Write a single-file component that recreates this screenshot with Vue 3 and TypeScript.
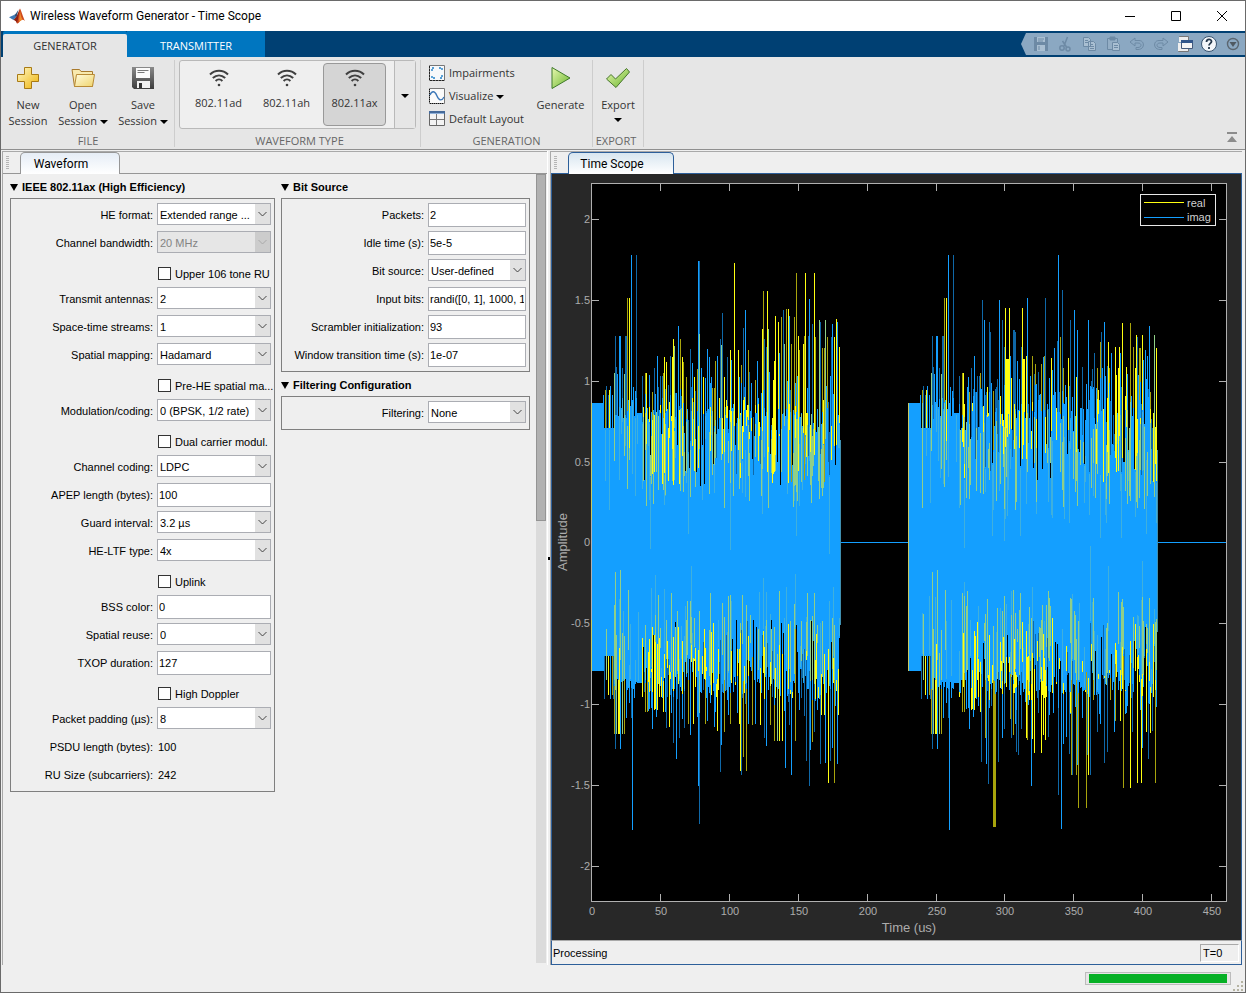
<script setup lang="ts">
import { ref } from 'vue'

type Kind = 'select' | 'input' | 'check' | 'static'
interface Field {
  id: string
  label: string
  kind: Kind
  value: string
  disabled?: boolean
}

const f = (id: string, kind: Kind, label: string, value = '', disabled = false): Field => ({ id, kind, label, value, disabled })

const heFields = ref<Field[]>([
  f('he-format', 'select', 'HE format:', 'Extended range ...'),
  f('bandwidth', 'select', 'Channel bandwidth:', '20 MHz', true),
  f('upper-ru', 'check', 'Upper 106 tone RU'),
  f('antennas', 'select', 'Transmit antennas:', '2'),
  f('streams', 'select', 'Space-time streams:', '1'),
  f('mapping', 'select', 'Spatial mapping:', 'Hadamard'),
  f('pre-he', 'check', 'Pre-HE spatial ma...'),
  f('mcs', 'select', 'Modulation/coding:', '0 (BPSK, 1/2 rate)'),
  f('dcm', 'check', 'Dual carrier modul.'),
  f('coding', 'select', 'Channel coding:', 'LDPC'),
  f('apep', 'input', 'APEP length (bytes):', '100'),
  f('guard', 'select', 'Guard interval:', '3.2 µs'),
  f('ltf', 'select', 'HE-LTF type:', '4x'),
  f('uplink', 'check', 'Uplink'),
  f('bss', 'input', 'BSS color:', '0'),
  f('reuse', 'select', 'Spatial reuse:', '0'),
  f('txop', 'input', 'TXOP duration:', '127'),
  f('doppler', 'check', 'High Doppler'),
  f('padding', 'select', 'Packet padding (µs):', '8'),
  f('psdu', 'static', 'PSDU length (bytes):', '100'),
  f('ru-size', 'static', 'RU Size (subcarriers):', '242'),
])
const bitFields = ref<Field[]>([
  f('packets', 'input', 'Packets:', '2'),
  f('idle', 'input', 'Idle time (s):', '5e-5'),
  f('bit-source', 'select', 'Bit source:', 'User-defined'),
  f('bits', 'input', 'Input bits:', 'randi([0, 1], 1000, 1, \'int8\')'),
  f('scrambler', 'input', 'Scrambler initialization:', '93'),
  f('window', 'input', 'Window transition time (s):', '1e-07'),
])
const filterFields = ref<Field[]>([f('filtering', 'select', 'Filtering:', 'None')])

const columns = [
  { cls: 'wide', groups: [{ title: 'IEEE 802.11ax (High Efficiency)', fields: heFields.value }] },
  {
    cls: 'narrow',
    groups: [
      { title: 'Bit Source', fields: bitFields.value },
      { title: 'Filtering Configuration', fields: filterFields.value },
    ],
  },
]

const waveforms = ['802.11ad', '802.11ah', '802.11ax']
const selected = ref('802.11ax')

/* Scope geometry */
const yTicks = [2, 1.5, 1, 0.5, 0, -0.5, -1, -1.5, -2].map((v, i) => ({ v, y: 219 + Math.round(i * 80.85) }))
const xTicks = [0, 50, 100, 150, 200, 250, 300, 350, 400, 450].map((v, i) => ({ v, x: 592 + Math.round(i * 68.9) }))

/* Peaks as "x,y,kind": b/c bright and dim imag, y/z bright and dim real, g mixed */
const preTop = '603,395,b 605,390,z 606,386,c 608,395,c 609,390,y 610,386,b 612,395,b 614,373,g 615,336,c 616,367,c 617,374,b 619,336,b 620,336,b 622,368,c 624,374,g 625,336,c 626,336,c 627,298,z 628,400,b 629,298,y 631,255,b 633,387,b 635,391,b 636,255,c 642,376,c 645,373,z 646,373,y 652,392,z 654,368,c 657,356,b 660,376,c 662,376,c 663,373,z'
const preBottom = '604,699,c 606,676,z 608,695,y 610,699,b 612,695,z 613,699,c 614,734,z 615,749,c 616,734,g 618,734,y 619,734,y 620,749,b 622,734,g 624,734,z 626,718,b 629,703,b 631,718,c 632,830,b 634,698,b 642,697,y 645,712,z 647,712,z 649,709,b 651,708,b 652,729,b 654,710,y 655,709,y 656,717,b 657,710,y 661,697,y 663,712,y'
const topA = '664,357,y 666,362,y 670,356,c 672,357,y 673,339,y 674,346,g 678,326,b 680,339,z 682,357,y 683,362,z 686,377,z 690,349,c 692,363,b 694,377,y 697,369,z 698,261,b 699,261,c 699,334,g 701,368,b 703,377,y 707,349,b 709,357,b 712,388,z 715,361,z 714,388,z 717,356,b 720,339,c 721,345,g 722,313,c 724,377,y 727,357,c 730,350,y 731,360,b 734,263,y 738,350,y 741,365,z 743,328,c 745,310,b 748,350,z 749,372,c 755,380,z 757,361,b 762,329,y 763,291,z 764,339,c 766,347,c 767,291,y 768,329,g 769,372,b 773,380,y 774,361,y 775,316,y 778,322,y 779,353,b 781,317,z 783,310,c 784,344,g 786,309,z 788,309,y 789,316,b 791,344,z 794,317,z 796,273,z 798,336,y 799,350,z 803,344,y 804,336,z 805,273,y 808,336,c 809,299,b 812,324,c 814,273,y 815,337,z 819,320,g 820,322,c 822,348,z 824,348,z 825,320,g 827,337,z 831,337,c 832,324,b 834,337,y 836,319,y 837,322,b 839,347,y'
const bottomA = '666,728,c 669,727,y 673,743,c 676,759,b 679,738,c 682,719,b 684,728,c 688,724,z 690,735,b 693,724,y 697,717,b 699,824,c 698,786,b 699,713,g 705,724,z 707,721,b 711,693,b 714,727,b 717,731,y 720,772,c 721,745,b 724,732,z 727,700,b 730,724,z 737,713,b 739,724,y 740,771,y 741,775,c 743,757,z 746,771,z 748,724,b 752,725,z 755,724,b 760,725,y 764,738,c 766,746,b 770,725,z 774,741,z 777,741,g 779,741,y 782,741,y 785,768,b 789,725,c 791,775,b 795,741,z 799,710,b 804,716,c 806,761,c 809,786,c 810,750,b 812,742,z 814,732,c 817,710,b 820,764,c 821,715,y 824,715,y 825,763,b 828,783,y 830,761,c 832,748,b 834,783,z 837,764,b 838,715,y'
const topB = '982,300,c 984,320,b 987,387,y 989,322,c 990,332,c 993,391,z 997,379,c 999,300,b 1002,320,c 1004,347,c 1005,308,y 1006,359,y 1007,359,y 1008,359,y 1009,308,y 1010,356,b 1011,378,y 1013,330,c 1014,330,c 1015,332,c 1017,361,b 1019,379,b 1021,347,c 1022,308,y 1023,359,y 1024,359,y 1026,356,y 1027,298,b 1032,356,z 1034,374,c 1035,364,z 1038,372,c 1041,364,z 1043,357,b 1044,356,z 1045,298,c 1051,358,y 1052,370,b 1054,348,b 1057,341,c 1058,255,b 1060,337,z 1062,290,c 1063,368,z 1068,358,y 1070,320,c 1074,310,b 1076,377,y 1077,330,b 1082,367,c 1088,320,b 1091,381,c 1092,369,c 1094,353,c 1097,368,z 1098,390,y 1100,342,z 1101,332,c 1102,368,b 1104,322,b 1107,366,c 1108,342,y 1109,368,z 1111,353,b 1115,347,y 1116,375,y 1118,368,y 1119,347,y 1120,353,b 1122,323,y 1126,367,y 1127,374,b 1130,323,z 1133,347,z 1135,368,y 1136,335,y 1137,337,c 1139,348,z 1140,348,z 1142,335,y 1143,360,b 1145,350,b 1147,356,b 1149,326,b 1150,392,z 1154,335,g 1156,348,y'
const bottomB = '981,762,c 985,738,z 986,764,b 988,784,c 991,706,c 993,827,z 994,827,z 995,827,z 998,762,c 1000,688,y 1002,738,b 1004,729,c 1010,719,z 1011,738,c 1013,735,z 1015,724,b 1016,752,c 1018,755,c 1021,729,c 1026,738,y 1027,740,z 1029,700,y 1031,786,b 1032,739,y 1034,753,y 1038,713,c 1041,753,y 1043,735,y 1045,740,y 1048,737,c 1049,715,b 1052,693,y 1058,795,c 1061,829,b 1063,744,b 1066,737,b 1069,754,c 1070,713,y 1071,775,z 1072,775,c 1076,775,z 1077,765,b 1078,808,z 1082,718,b 1086,808,z 1087,755,c 1088,775,y 1090,775,c 1093,700,z 1097,732,c 1100,724,b 1104,763,c 1107,752,c 1110,700,z 1114,732,b 1115,721,z 1120,721,y 1123,788,z 1130,788,y 1132,732,c 1137,783,y 1141,783,y 1142,748,b 1146,732,y 1148,759,c 1150,733,y 1152,731,c 1155,783,z'

interface Peak { x: number; y: number; k: string }
const read = (s: string, dx = 0): Peak[] =>
  s.split(' ').map((p) => {
    const [x, y, k] = p.split(',')
    return { x: Number(x) + dx, y: Number(y), k }
  })

let seed = 20211
const rnd = (): number => {
  seed = (seed * 16807) % 2147483647
  return seed / 2147483647
}

const colors: Record<string, string> = {
  b: '#149fff',
  c: '#0f68a8',
  y: '#ffff11',
  z: '#a8a40c',
  g: '#8fcf88',
  t: '#3fb0dd',
}
const order = ['c', 'z', 'b', 'y']

function buildStrokes(): { color: string; d: string }[] {
  const back: Record<string, string> = { c: '', z: '', b: '', y: '' }
  const core: string[] = []
  const front: Record<string, string> = { g: '', t: '', y: '', z: '' }
  const line = (x: number, y0: number, y1: number): string => `M${x + 0.5} ${Math.round(y0)}V${Math.round(y1)}`

  for (const start of [592, 909]) {
    const dx = start - 592
    for (let x = start; x < start + 248; x++) {
      const r = x - start
      let top = 403
      let bottom = 671
      if (r >= 12 && r < 22) {
        top = 428
        bottom = 656
      } else if (r >= 22 && r < 45) {
        top = 398 + rnd() * 22
        bottom = 690 - rnd() * 12
      } else if (r >= 45 && r < 50) {
        top = 413
        bottom = 683
      } else if (r >= 50) {
        top = 408 + Math.pow(rnd(), 1.3) * 78
        bottom = 694 - Math.pow(rnd(), 1.3) * 76
        if (rnd() < 0.3) back.y += line(x, 395 + rnd() * 40, 542)
        if (rnd() < 0.3) back.y += line(x, 542, 700 - rnd() * 40)
        if (rnd() < 0.3) back.b += line(x, 375 + rnd() * 45, 542)
        if (rnd() < 0.3) back.b += line(x, 542, 715 - rnd() * 40)
        if (rnd() < 0.35) back.c += line(x, 385 + rnd() * 50, 542)
        if (rnd() < 0.35) back.c += line(x, 542, 705 - rnd() * 50)
        if (rnd() < 0.2) front.g += line(x, 410 + rnd() * 45, 460 + rnd() * 50)
        if (rnd() < 0.2) front.g += line(x, 590 + rnd() * 40, 640 + rnd() * 45)
      }
      core.push(line(x, top, bottom))
      if (r > 12 && rnd() < 0.2) front.t += line(x, top + 2, top + 20 + rnd() * 65)
      if (r > 12 && rnd() < 0.2) front.t += line(x, bottom - 20 - rnd() * 65, bottom - 2)
    }
    const tops = [...read(preTop, dx), ...read(dx ? topB : topA)]
    const bottoms = [...read(preBottom, dx), ...read(dx ? bottomB : bottomA)]
    for (const p of tops) {
      if (p.k === 'g') front.g += line(p.x, p.y, 425 + rnd() * 50)
      else back[p.k] += line(p.x, p.y, 542)
      if (p.k === 'y' && rnd() < 0.55) front.y += line(p.x, p.y, 405 + rnd() * 60)
      if (p.k === 'z' && rnd() < 0.45) front.g += line(p.x, 400 + rnd() * 30, 450 + rnd() * 60)
    }
    for (const p of bottoms) {
      if (p.k === 'g') front.g += line(p.x, 610 + rnd() * 50, p.y)
      else back[p.k] += line(p.x, 542, p.y)
      if (p.k === 'y' && rnd() < 0.55) front.y += line(p.x, 630 + rnd() * 50, p.y)
      if (p.k === 'z' && rnd() < 0.45) front.g += line(p.x, 590 + rnd() * 50, 680)
    }
    front.g += line(629 + dx, 415, 460) + line(620 + dx, 570, 660) + line(615 + dx, 572, 690) + line(628 + dx, 590, 650)
  }
  return [
    ...order.map((k) => ({ color: colors[k], d: back[k] })),
    { color: colors.b, d: core.join('') },
    { color: colors.t, d: front.t },
    { color: colors.g, d: front.g },
    { color: colors.y, d: front.y },
  ].filter((s) => s.d)
}
const strokes = buildStrokes()
</script>

<template>
  <div class="window">
    <header class="titlebar">
      <svg class="logo" width="16" height="16" viewBox="0 0 16 16" aria-hidden="true">
        <path d="M0 9.200L5 7l2.500 2L4.500 12z" fill="#3b78b5" />
        <path d="M5 7c2-.5 3-3.500 4.500-5.500L7.500 9.500z" fill="#2c4f7a" />
        <path d="M4.500 12L7.500 9 11 .5C12 2 14 9 16 13c-2-2-4-2-6 1.500-.8.8-1.500 1-2 1C7.500 13.500 6 11.500 4.500 12z" fill="#cf4a1c" />
        <path d="M11 .5C10 5 9 11 8 15.500 7.500 13.500 6 12 4.500 12 8 10 9.500 4 11 .5z" fill="#8b1f13" />
        <path d="M11 3c.4 3 1 6 2.500 8.500L10 14z" fill="#f08a2c" />
      </svg>
      <h1>Wireless Waveform Generator - Time Scope</h1>
      <div class="window-buttons">
        <button aria-label="Minimize"><svg width="12" height="12" viewBox="0 0 12 12"><path d="M1 6.500h10" /></svg></button>
        <button aria-label="Maximize"><svg width="12" height="12" viewBox="0 0 12 12"><path d="M1.500 1.500h9v9h-9z" /></svg></button>
        <button aria-label="Close"><svg width="12" height="12" viewBox="0 0 12 12"><path d="M1 1l10 10M11 1L1 11" /></svg></button>
      </div>
    </header>

    <nav class="tabs">
      <button class="tab active">GENERATOR</button>
      <button class="tab">TRANSMITTER</button>
      <div class="quick">
        <button class="off" aria-label="Save"><svg viewBox="0 0 18 18"><path d="M2 2h14v14H2z" fill="#6d8aa5" /><path d="M5 2h8v5H5zM5 10h8v6H5z" fill="#a9bfd2" /><path d="M6 4h6M6 6h5M7 11v4" stroke="#6d8aa5" /></svg></button>
        <button class="off" aria-label="Cut"><svg viewBox="0 0 18 18" fill="none" stroke="#6d8aa5" stroke-width="1.500"><path d="M11.500 2L8 11M6.500 6l4 6" /><circle cx="6" cy="13" r="2.200" /><circle cx="12" cy="14" r="2" /></svg></button>
        <button class="off" aria-label="Copy"><svg viewBox="0 0 18 18" fill="#a9bfd2" stroke="#6d8aa5"><path d="M3.500 2.500h5l2 2v7h-7zM8.500 6.500h5l2 2v7h-7z" /><path d="M5 5.500h3M5 7.500h3M10 9.500h3M10 11.500h4M10 13.500h4" /></svg></button>
        <button class="off" aria-label="Paste"><svg viewBox="0 0 18 18" fill="#94aec5" stroke="#6d8aa5"><path d="M3.500 3.500h10v11h-10z" /><path d="M6 2h5v3H6z" fill="#6d8aa5" /><path d="M8.500 7.500h5l2 2v6h-7z" fill="#a9bfd2" /><path d="M10 10.500h4M10 12.500h4" /></svg></button>
        <button class="off" aria-label="Undo"><svg viewBox="0 0 18 18" fill="none" stroke="#6d8aa5"><path d="M2 7l5-4v2.500h4c6 0 6 9-1 9H8v-2h2c4 0 4-4.500 0-4.500H7V11z" /></svg></button>
        <button class="off" aria-label="Redo"><svg viewBox="0 0 18 18" fill="none" stroke="#6d8aa5"><path d="M16 7l-5-4v2.500H7c-6 0-6 9 1 9h2v-2H8c-4 0-4-4.500 0-4.500h3V11z" /></svg></button>
        <button aria-label="Windows"><svg viewBox="0 0 18 18"><path d="M3.500 1.500h9v5M3.500 1.500v5M2.500 9v7.500h10V14" fill="#eee" stroke="#777" /><path d="M3 2h9v5H3zM2 8h10v8H2z" fill="#eee" /><path d="M5.500 5.500h11v8h-11z" fill="#f5f5f5" stroke="#44597a" /><path d="M5 5h12v3H5z" fill="#32568a" /></svg></button>
        <button aria-label="Help"><svg viewBox="0 0 18 18"><circle cx="9" cy="9" r="7.500" fill="#f4f7fa" stroke="#38536f" /><path d="M6.500 7c0-3.500 5-3.300 5-.5 0 1.800-2.500 1.900-2.500 4M9 12v2" fill="none" stroke="#26394d" stroke-width="1.800" /></svg></button>
        <button aria-label="More"><svg viewBox="0 0 18 18"><circle cx="9" cy="9" r="5.500" fill="none" stroke="#5b6670" stroke-width="1.400" /><path d="M5.500 7h7L9 12z" fill="#4f5962" /></svg></button>
      </div>
    </nav>

    <section class="strip">
      <div class="section file">
        <div class="body">
          <button class="big">
            <svg width="24" height="24" viewBox="0 0 24 24"><defs><linearGradient id="gold" x1="0" y1="0" x2="1" y2="1"><stop offset="0" stop-color="#fff9c8" /><stop offset="1" stop-color="#eeb30a" /></linearGradient></defs><path d="M8.500 1.500h7v7h7v7h-7v7h-7v-7h-7v-7h7z" fill="url(#gold)" stroke="#a97a14" /></svg>
            <span>New</span><span>Session</span>
          </button>
          <button class="big">
            <svg width="24" height="24" viewBox="0 0 24 24"><defs><linearGradient id="sand" x1="0" y1="0" x2="1" y2="1"><stop offset="0" stop-color="#fffbe0" /><stop offset="1" stop-color="#f0d46a" /></linearGradient></defs><path d="M1 3.500h7.500l1.500 2h11.500V20.500H3.500z" fill="#f8e9ae" stroke="#a97a2c" /><path d="M5.500 8.500h18l-2 12H3.500z" fill="url(#sand)" stroke="#b88a35" /></svg>
            <span>Open</span><span>Session <i class="caret"></i></span>
          </button>
          <button class="big">
            <svg width="24" height="24" viewBox="0 0 24 24"><defs><linearGradient id="steel" x1="0" y1="0" x2="0" y2="1"><stop offset="0" stop-color="#8a8a8a" /><stop offset="1" stop-color="#3d3d3d" /></linearGradient></defs><path d="M1 1h22v22H3l-2-2z" fill="url(#steel)" /><path d="M5 2h14v10H5z" fill="#fafafa" /><path d="M6.500 4.500h11M6.500 6.500h7" stroke="#777" /><path d="M6 15h13v7H6z" fill="#f1f1f1" /><path d="M8 17h3v5H8z" fill="#333" /></svg>
            <span>Save</span><span>Session <i class="caret"></i></span>
          </button>
        </div>
        <h2>FILE</h2>
      </div>

      <div class="section waveform">
        <div class="body">
          <div class="gallery">
            <button v-for="w in waveforms" :key="w" class="tile" :class="{ on: selected === w }" @click="selected = w">
              <svg width="20" height="20" viewBox="0 0 20 20" fill="none" stroke="#404040" stroke-width="2"><path d="M1 6.500c5-5 13-5 18 0M3.800 10c3.800-3.500 8.600-3.500 12.400 0M6.600 13c2-2 4.800-2 6.800 0" /><circle cx="10" cy="17" r="1.300" fill="#404040" stroke="none" /></svg>
              <span>{{ w }}</span>
            </button>
            <button class="more" aria-label="More waveform types"><i class="caret"></i></button>
          </div>
        </div>
        <h2>WAVEFORM TYPE</h2>
      </div>

      <div class="section generation">
        <div class="body">
          <div class="stack">
            <button><svg width="16" height="16" viewBox="0 0 16 16"><path d="M.5.500h15v15H.5z" fill="#f7f9fb" stroke="#777" /><path d="M3 6V3h3M10 3h3v3M13 10v3h-3M6 13H3v-3" fill="none" stroke="#2080c8" stroke-width="1.400" stroke-dasharray="2 1" /><path d="M1 15.500h14M.5 1v14" stroke="#222" stroke-dasharray="2 1" /></svg>Impairments</button>
            <button><svg width="16" height="16" viewBox="0 0 16 16"><path d="M.5.500h15v15H.5z" fill="#fbfbfb" stroke="#777" /><path d="M1 7c2-5 5-4 7 1s5 5 7 1" fill="none" stroke="#3d78b8" stroke-width="1.400" /><path d="M1 15.500h14M.5 1v14" stroke="#111" stroke-dasharray="1 1" /></svg><span>Visualize <i class="caret"></i></span></button>
            <button><svg width="16" height="16" viewBox="0 0 16 16"><path d="M.5.500h15v14H.5z" fill="#f3f3f3" stroke="#666" /><path d="M0 0h16v3H0z" fill="#466a9a" /><path d="M1 2.500h14" stroke="#8fb0d8" /><path d="M1 8.500h14M7.500 3v11" stroke="#777" /></svg>Default Layout</button>
          </div>
          <button class="big generate">
            <svg width="24" height="24" viewBox="0 0 24 24"><defs><linearGradient id="leaf" x1="0" y1="0" x2="1" y2="1"><stop offset="0" stop-color="#e8f8b0" /><stop offset="1" stop-color="#68b52c" /></linearGradient></defs><path d="M3 1.500L21 12 3 22.500z" fill="url(#leaf)" stroke="#3f7a2a" /></svg>
            <span>Generate</span>
          </button>
        </div>
        <h2>GENERATION</h2>
      </div>

      <div class="section export">
        <div class="body">
          <button class="big">
            <svg width="24" height="24" viewBox="0 0 24 24"><path d="M.5 13L5 8.500 9.500 13 20.500 2.500l3 3.500L10 21.500z" fill="url(#leaf)" stroke="#47752c" /></svg>
            <span>Export</span><i class="caret"></i>
          </button>
        </div>
        <h2>EXPORT</h2>
      </div>
      <button class="collapse" aria-label="Collapse toolstrip"><svg width="12" height="12" viewBox="0 0 12 12" fill="#8c8c8c"><path d="M1 1h10v2H1zM6 5l5 6H1z" /></svg></button>
    </section>

    <main class="panes">
      <section class="pane left">
        <div class="docbar"><i class="grip"></i><button class="doctab">Waveform</button></div>
        <div class="scroller">
          <form class="columns" @submit.prevent>
            <div v-for="col in columns" :key="col.cls" :class="['column', col.cls]">
              <template v-for="g in col.groups" :key="g.title">
                <h3><i class="disclose"></i>{{ g.title }}</h3>
                <div class="group">
                  <div v-for="row in g.fields" :key="row.id" class="row">
                    <template v-if="row.kind === 'check'">
                      <span></span>
                      <label class="check"><input :id="row.id" type="checkbox" />{{ row.label }}</label>
                    </template>
                    <template v-else>
                      <label class="name" :for="row.id">{{ row.label }}</label>
                      <span v-if="row.kind === 'select'" class="drop" :class="{ dim: row.disabled }">
                        <select :id="row.id" v-model="row.value" :disabled="row.disabled"><option>{{ row.value }}</option></select>
                        <svg viewBox="0 0 15 20" aria-hidden="true"><path d="M3.500 8L7.500 12l4-4" fill="none" /></svg>
                      </span>
                      <input v-else-if="row.kind === 'input'" :id="row.id" v-model="row.value" class="text" type="text" />
                      <output v-else :id="row.id">{{ row.value }}</output>
                    </template>
                  </div>
                </div>
              </template>
            </div>
          </form>
          <div class="scrollbar"><i></i></div>
        </div>
      </section>
      <div class="divider"><i></i></div>
      <section class="pane right">
        <div class="docbar"><i class="grip"></i><button class="doctab">Time Scope</button></div>
        <div class="scope">
          <svg class="chart" viewBox="552 174 688 766" role="img" aria-label="Amplitude over time, real and imag">
            <rect x="592" y="183" width="634" height="718" fill="#000" />
            <g fill="none" shape-rendering="crispEdges">
              <g stroke="#b0b0b0">
                <path d="M591.500 183.500H1226.500V901.500H591.500Z" />
                <path v-for="t in yTicks" :key="t.v" :d="`M592 ${t.y + 0.5}h7M1226 ${t.y + 0.5}h-7`" />
                <path v-for="t in xTicks" :key="t.v" :d="`M${t.x - 0.5} 901v-7M${t.x - 0.5} 184v7`" />
              </g>
              <path v-for="(s, i) in strokes" :key="i" :d="s.d" :stroke="s.color" />
              <path d="M840 542.500H909M1157 542.500H1226" stroke="#149fff" />
              <path d="M591.500 403V520M591.500 620V671M908.500 403V671" stroke="#c8c860" />
              <path d="M840.500 440V625M1157.500 450V632" stroke="#3f8fb0" />
              <rect x="1140.500" y="194.500" width="75" height="31" fill="#000" stroke="#e8e8e8" />
              <path d="M1144 202.500h40" stroke="#ffff11" />
              <path d="M1144 217.500h40" stroke="#149fff" />
            </g>
            <g class="labels">
              <text v-for="t in yTicks" :key="t.v" x="590" :y="t.y + 4" text-anchor="end">{{ t.v }}</text>
              <text v-for="t in xTicks" :key="t.v" :x="t.x" y="915" text-anchor="middle">{{ t.v }}</text>
              <text x="1187" y="207" class="legend">real</text>
              <text x="1187" y="221" class="legend">imag</text>
              <text x="909" y="932" text-anchor="middle" class="axis">Time (us)</text>
              <text transform="translate(567 542) rotate(-90)" text-anchor="middle" class="axis">Amplitude</text>
            </g>
          </svg>
        </div>
        <div class="scope-status"><span>Processing</span><span class="time">T=0</span></div>
      </section>
    </main>

    <footer class="statusbar">
      <progress max="100" value="100" aria-label="Progress"></progress>
      <svg width="12" height="12" viewBox="0 0 12 12" fill="#b5b3a2" aria-hidden="true"><path d="M9 1h2v2H9zM9 5h2v2H9zM9 9h2v2H9zM5 5h2v2H5zM5 9h2v2H5zM1 9h2v2H1z" /></svg>
    </footer>
  </div>
</template>

<style>
body {
  margin: 0;
}
</style>

<style scoped>
* {
  box-sizing: border-box;
}
.window {
  display: flex;
  flex-direction: column;
  height: 100vh;
  border: 1px solid #6a6a6a;
  background: #efefef;
  font-family: "Liberation Sans", Arial, sans-serif;
  font-size: 11px;
  color: #000;
}
button {
  border: 0;
  padding: 0;
  background: none;
  font: inherit;
  color: inherit;
}
h1,
h2,
h3 {
  margin: 0;
  font-weight: normal;
}
.tabs,
.strip {
  font-family: "Open Sans", "Noto Sans", sans-serif;
  font-size: 11px;
}
.titlebar {
  display: flex;
  align-items: center;
  height: 30px;
  padding-left: 8px;
  background: #fff;
}
.titlebar h1 {
  flex: 1;
  margin-left: 5px;
  font-family: Roboto, "Open Sans", sans-serif;
  font-size: 12px;
}
.window-buttons {
  display: flex;
}
.window-buttons button {
  width: 46px;
  height: 28px;
}
.window-buttons svg {
  display: block;
  margin: auto;
  fill: none;
  stroke: #000;
}
.tabs {
  display: flex;
  height: 26px;
  padding-left: 2px;
  background: #004073;
  color: #fff;
}
.tab {
  width: 138px;
  padding-top: 3px;
  background: #0076c0;
}
.tab.active {
  width: 124px;
  margin-top: 3px;
  padding-top: 0;
  border-radius: 2px 2px 0 0;
  background: #e6e6e6;
  color: #333;
  box-shadow: 0 -3px 0 #0076c0;
}
.quick {
  display: flex;
  align-items: center;
  margin: 2px 0 2px auto;
  padding-left: 8px;
  background: #8ba8c2;
  clip-path: polygon(5px 0, 100% 0, 100% 100%, 5px 100%, 0 50%);
}
.quick button {
  width: 24px;
  height: 18px;
}
.quick svg {
  display: block;
  width: 18px;
  height: 18px;
  margin: auto;
}
.strip {
  display: flex;
  height: 93px;
  flex: none;
  padding-left: 1px;
  background: #e6e6e6;
  border-bottom: 1px solid #8f8f8f;
  color: #333;
}
.section {
  display: flex;
  flex-direction: column;
  margin: 3px 0 2px;
  border-right: 1px solid #cdcdcd;
}
.section .body {
  display: flex;
  flex: none;
  height: 69px;
}
.section h2 {
  flex: none;
  padding-top: 4px;
  font-size: 11px;
  line-height: 16px;
  text-align: center;
  color: #666;
}
.file {
  width: 173px;
}
.file .big:nth-child(1) {
  width: 52px;
}
.file .big:nth-child(2) {
  width: 58px;
}
.file .big:nth-child(3) {
  width: 62px;
}
.big {
  display: flex;
  flex-direction: column;
  align-items: center;
  padding-top: 6px;
  line-height: 16px;
  white-space: nowrap;
}
.big svg {
  flex: none;
  margin-bottom: 7px;
}
.caret {
  display: inline-block;
  border: 4px solid transparent;
  border-top-color: #000;
  border-bottom: 0;
  vertical-align: middle;
}
.big > .caret {
  margin-top: 5px;
}
.waveform {
  width: 246px;
  padding-left: 4px;
}
.gallery {
  display: flex;
  width: 237px;
  height: 69px;
  padding-left: 7px;
  gap: 5px;
  border: 1px solid #b9b9b9;
  border-radius: 3px;
  background: #efefef;
}
.tile {
  display: flex;
  flex-direction: column;
  align-items: center;
  gap: 7px;
  width: 63px;
  margin: 2px 0;
  padding-top: 4px;
  border: 1px solid transparent;
  border-radius: 4px;
  line-height: 16px;
}
.tile.on {
  border-color: #999;
  background: #d5d5d5;
}
.more {
  flex: 1;
  margin-left: 3px;
  border-left: 1px solid #b9b9b9;
  background: #e6e6e6;
}
.generation {
  width: 172px;
}
.stack {
  display: flex;
  flex-direction: column;
  width: 108px;
  padding: 1px 0 0 8px;
}
.stack button {
  display: flex;
  flex: none;
  align-items: center;
  gap: 4px;
  height: 23px;
  white-space: nowrap;
}
.generate {
  width: 63px;
}
.export {
  width: 51px;
}
.export .big {
  width: 50px;
}
.export h2 {
  padding-right: 4px;
}
.collapse {
  align-self: flex-end;
  margin: 0 7px 6px auto;
}
.collapse svg {
  display: block;
}
.panes {
  display: grid;
  grid-template-columns: 545px 4px 1fr;
  flex: 1;
  min-height: 0;
  padding: 1px 3px 0 1px;
}
.pane {
  display: flex;
  flex-direction: column;
  min-width: 0;
  min-height: 0;
}
.docbar {
  display: flex;
  flex: none;
  height: 23px;
  border-top: 1px solid #a9a9a9;
  border-bottom: 1px solid #969696;
}
.left {
  border-left: 1px solid #a9a9a9;
}
.grip {
  width: 3px;
  margin: 4px 11px 3px 3px;
  background: repeating-linear-gradient(#b5b5b5 0 1px, transparent 1px 2px);
}
.doctab {
  height: 22px;
  width: 100px;
  padding-right: 18px;
  border: 1px solid #969696;
  border-bottom: 0;
  border-radius: 5px 5px 0 0;
  background: linear-gradient(#e6edf6, #fff);
  font-family: Roboto, "Open Sans", sans-serif;
  font-size: 12px;
  line-height: 20px;
}
.scroller {
  display: flex;
  flex: 1;
  min-height: 0;
}
.columns {
  display: flex;
  flex: 1;
  gap: 6px;
  padding-left: 7px;
}
.wide {
  width: 265px;
}
.narrow {
  width: 249px;
}
h3 {
  display: flex;
  align-items: center;
  gap: 4px;
  height: 24px;
  padding-top: 2px;
  font-size: 11px;
  font-weight: bold;
}
.disclose {
  border: 4px solid transparent;
  border-top: 7px solid #000;
  border-bottom: 0;
}
.group {
  padding: 2px 3px;
  border: 1px solid #7f7f7f;
}
.row {
  display: grid;
  grid-template-columns: 1fr 114px;
  column-gap: 4px;
  align-items: center;
  height: 28px;
}
.narrow .row {
  grid-template-columns: 1fr 98px;
}
.name {
  text-align: right;
  white-space: nowrap;
}
.drop {
  position: relative;
  height: 22px;
  margin-bottom: 2px;
}
.drop select {
  width: 100%;
  height: 22px;
  padding: 1px 16px 0 2px;
  border: 1px solid #abadb3;
  border-radius: 0;
  appearance: none;
  background: #fff;
  color: #000;
  font: inherit;
}
.drop svg {
  position: absolute;
  top: 1px;
  right: 1px;
  width: 15px;
  height: 20px;
  background: #e1e1e1;
  stroke: #444;
  pointer-events: none;
}
.drop.dim select {
  background: #e6e6e6;
  color: #838383;
  opacity: 1;
}
.drop.dim svg {
  background: #cccccc;
  stroke: #aaa;
}
.text {
  width: 100%;
  height: 24px;
  padding: 0 1px;
  border: 1px solid #abadb3;
  border-radius: 0;
  background: #fff;
  font: inherit;
}
.check {
  display: flex;
  align-items: center;
  gap: 4px;
  padding: 5px 0 0 1px;
  white-space: nowrap;
}
.check input {
  flex: none;
  width: 13px;
  height: 13px;
  margin: 0;
  appearance: none;
  border: 1px solid #333;
  background: #fff;
}
.row output {
  padding-left: 1px;
}
.scrollbar {
  width: 10px;
  margin: 0 1px 2px 0;
  background: #dbdbdb;
}
.scrollbar i {
  display: block;
  height: 44%;
  border: 1px solid #949494;
  background: #b1b1b1;
}
.divider {
  display: flex;
  align-items: center;
  border-right: 1px solid #a9a9a9;
  border-left: 1px solid #fff;
}
.divider i {
  width: 3px;
  height: 3px;
  background: #000;
}
.right .docbar {
  border-bottom-color: #2d5f9a;
}
.right .doctab {
  width: 106px;
  border-color: #2d5f9a;
  background: linear-gradient(#d8e6f0, #fff);
}
.scope {
  flex: 1;
  min-height: 0;
  border-left: 1px solid #2d5f9a;
  border-right: 1px solid #2d5f9a;
  padding-right: 1px;
  background: #282828;
}
.chart {
  display: block;
  width: 100%;
  height: 100%;
}
.labels {
  fill: #acacac;
  font-size: 11px;
}
.legend {
  fill: #d0d0d0;
}
.axis {
  font-size: 13px;
}
.scope-status {
  display: flex;
  align-items: center;
  justify-content: space-between;
  flex: none;
  height: 25px;
  padding: 0 2px 0 1px;
  border: 1px solid #2d5f9a;
  border-top-color: #a9a9a9;
}
.time {
  width: 39px;
  height: 18px;
  padding-left: 2px;
  border: 1px solid #fff;
  border-top-color: #a9a9a9;
  border-left-color: #a9a9a9;
  line-height: 17px;
}
.statusbar {
  display: flex;
  align-items: center;
  justify-content: flex-end;
  flex: none;
  height: 27px;
  gap: 1px;
  padding-right: 1px;
}
.statusbar svg {
  align-self: flex-end;
}
progress {
  width: 146px;
  height: 13px;
  padding: 1px 3px;
  appearance: none;
  border: 1px solid #bcbcbc;
  background: #e6e6e6;
}
progress::-webkit-progress-bar {
  background: #e6e6e6;
}
progress::-webkit-progress-value {
  background: #06b025;
}
</style>
